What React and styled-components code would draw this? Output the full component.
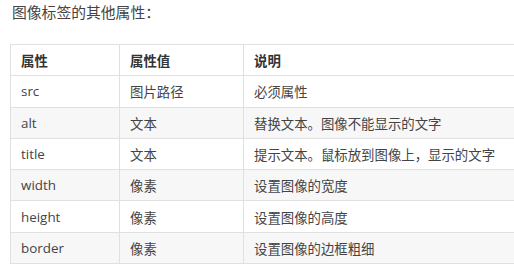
import React from "react";
import styled, { createGlobalStyle } from "styled-components";

const Global = createGlobalStyle`
  html, body { margin: 0; padding: 0; background: #fff; }
  body { overflow: hidden; width: 514px; height: 269px; }
`;

const Page = styled.div`
  width: 514px;
  height: 269px;
  overflow: hidden;
  font-family: "Open Sans", "Noto Sans CJK SC", sans-serif;
  color: #3a3a3a;
`;

const Title = styled.h3`
  margin: 0;
  padding-left: 12px;
  font-size: 14.8px;
  font-weight: 400;
  line-height: 23px;
  color: #444;
  font-family: "Noto Sans CJK SC", sans-serif;
`;

const Table = styled.table`
  margin: 21px 0 0 10px;
  width: 530px;
  border-collapse: collapse;
  table-layout: fixed;
  font-size: 13.4px;
`;

const Row = styled.tr`
  height: 31.3px;
  background: ${(p) => (p.$striped ? "#f7f7f7" : "#fff")};
`;

const Cell = styled.td`
  border: 1px solid #e0e0e0;
  padding: 0 10px;
  text-align: left;
  vertical-align: middle;
  white-space: nowrap;
  font-weight: ${(p) => (p.$head ? 700 : 400)};
  color: ${(p) => (p.$head ? "#333" : "#444")};
`;

const rows = [
  ["src", "图片路径", "必须属性"],
  ["alt", "文本", "替换文本。图像不能显示的文字"],
  ["title", "文本", "提示文本。鼠标放到图像上，显示的文字"],
  ["width", "像素", "设置图像的宽度"],
  ["height", "像素", "设置图像的高度"],
  ["border", "像素", "设置图像的边框粗细"],
];

export default function App() {
  return (
    <Page>
      <Global />
      <Title>图像标签的其他属性：</Title>
      <Table>
        <colgroup>
          <col style={{ width: 109 }} />
          <col style={{ width: 124 }} />
          <col />
        </colgroup>
        <thead>
          <Row>
            <Cell as="th" $head>属性</Cell>
            <Cell as="th" $head>属性值</Cell>
            <Cell as="th" $head>说明</Cell>
          </Row>
        </thead>
        <tbody>
          {rows.map((r, i) => (
            <Row key={r[0]} $striped={i % 2 === 1}>
              <Cell>{r[0]}</Cell>
              <Cell>{r[1]}</Cell>
              <Cell>{r[2]}</Cell>
            </Row>
          ))}
        </tbody>
      </Table>
    </Page>
  );
}
